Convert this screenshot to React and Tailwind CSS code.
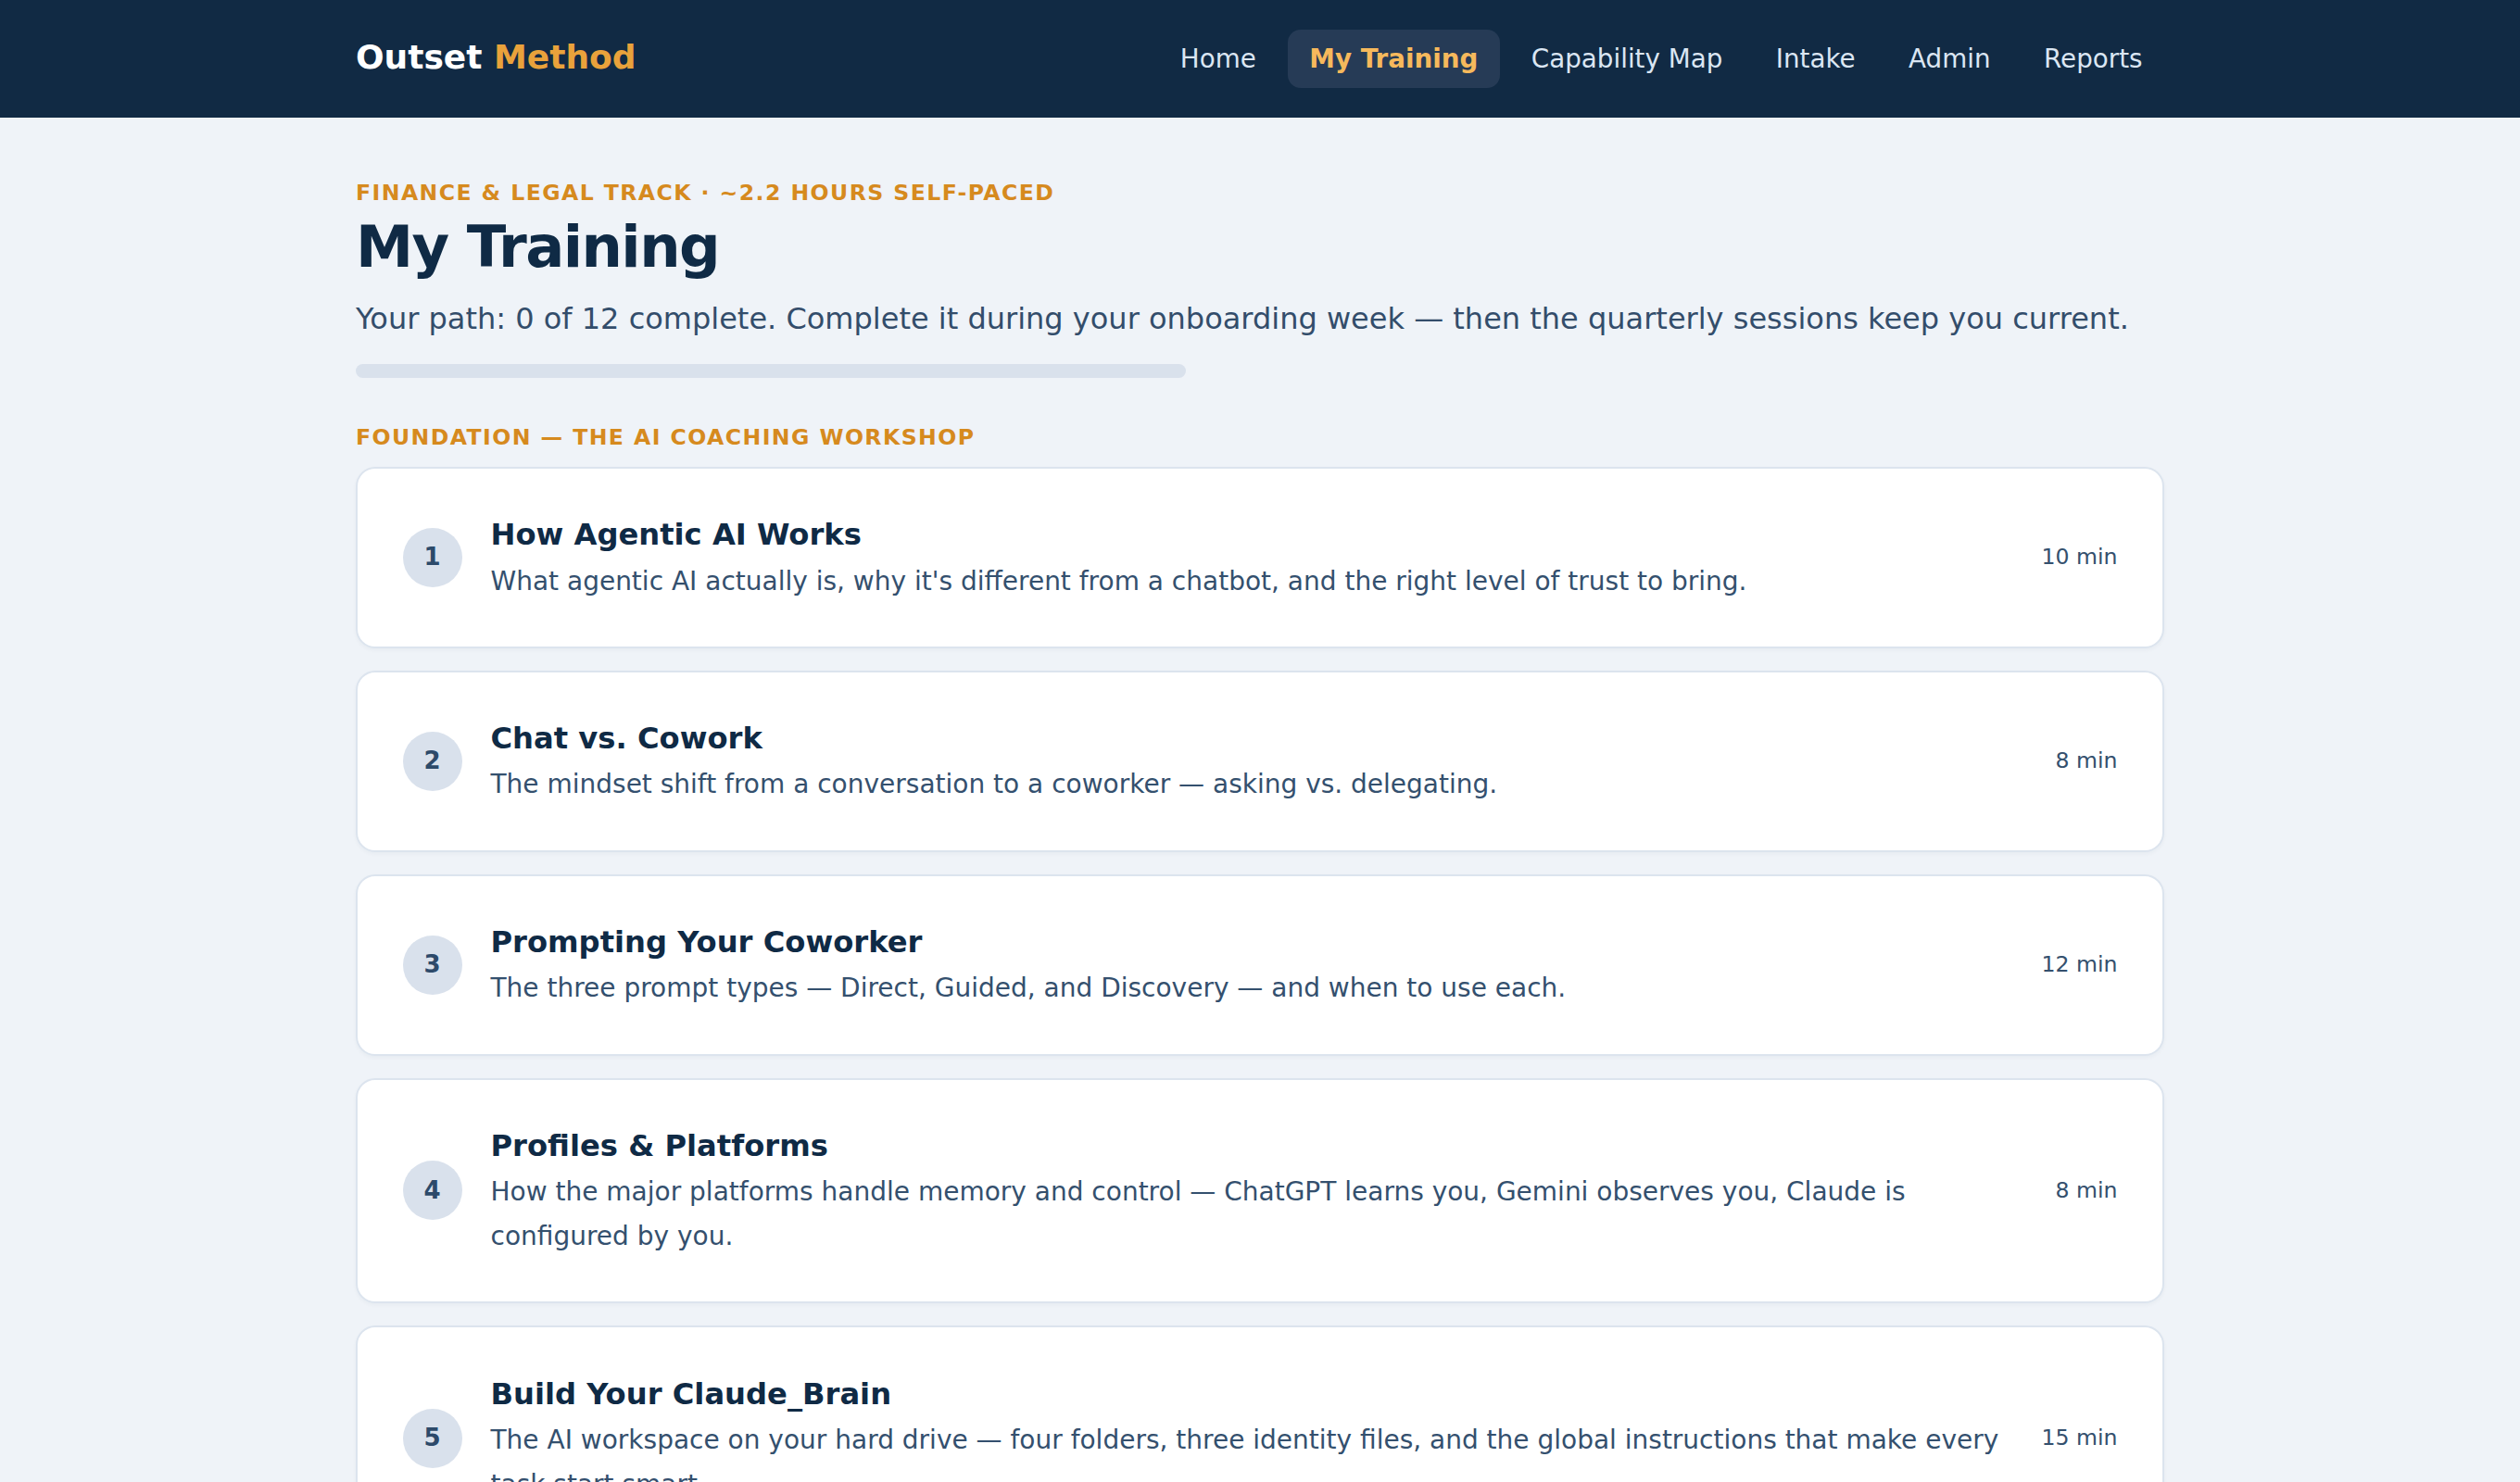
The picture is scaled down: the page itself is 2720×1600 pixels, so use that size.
import React from 'react';

const navLinks = ['Home', 'My Training', 'Capability Map', 'Intake', 'Admin', 'Reports'];

const modules = [
  {
    n: 1,
    title: 'How Agentic AI Works',
    desc: "What agentic AI actually is, why it's different from a chatbot, and the right level of trust to bring.",
    mins: '10 min',
  },
  {
    n: 2,
    title: 'Chat vs. Cowork',
    desc: 'The mindset shift from a conversation to a coworker — asking vs. delegating.',
    mins: '8 min',
  },
  {
    n: 3,
    title: 'Prompting Your Coworker',
    desc: 'The three prompt types — Direct, Guided, and Discovery — and when to use each.',
    mins: '12 min',
  },
  {
    n: 4,
    title: 'Profiles & Platforms',
    desc: 'How the major platforms handle memory and control — ChatGPT learns you, Gemini observes you, Claude is configured by you.',
    mins: '8 min',
  },
  {
    n: 5,
    title: 'Build Your Claude_Brain',
    desc: 'The AI workspace on your hard drive — four folders, three identity files, and the global instructions that make every task start smart.',
    mins: '15 min',
  },
];

export default function App() {
  const active = 'My Training';

  return (
    <div className="min-h-screen bg-[#eff3f8] font-['DejaVu_Sans',sans-serif]">
      {/* Top bar */}
      <header className="bg-[#112a44] h-[127px]">
        <div className="mx-auto max-w-[1952px] h-full flex items-center justify-between">
          <div className="text-[36px] font-bold text-white leading-none -mt-[3px]">
            Outset <span className="text-[#e9a23b]">Method</span>
          </div>
          <nav className="flex items-center gap-[10.5px]">
            {navLinks.map(link => (
              <a
                key={link}
                className={
                  link === active
                    ? 'px-[23.5px] py-[11px] rounded-[14px] bg-[#263b56] text-[#f6b95c] font-bold text-[27.75px] leading-[1.5]'
                    : 'px-[23.5px] py-[11px] rounded-[14px] text-[#dbe6f3] text-[27.75px] leading-[1.5]'
                }
              >
                {link}
              </a>
            ))}
          </nav>
        </div>
      </header>

      <main className="mx-auto max-w-[1952px] pt-[64px] pb-[60px]">
        <div className="text-[23.6px] font-bold tracking-[0.06em] uppercase text-[#d68a1e] leading-[1.5]">
          Finance &amp; Legal Track · ~2.2 hours self-paced
        </div>
        <h1 className="mt-[4px] text-[62.4px] font-bold text-[#0f2a45] leading-[1.2] tracking-[-0.025em]">
          My Training
        </h1>
        <p className="mt-[15px] text-[32px] text-[#334d6b] leading-[1.5]">
          Your path: 0 of 12 complete. Complete it during your onboarding week — then the quarterly sessions keep you current.
        </p>
        <div className="mt-[25px] w-[896px] h-[15px] rounded-full bg-[#d9e1ec]" />

        <h2 className="mt-[47px] text-[23.6px] font-bold tracking-[0.06em] uppercase text-[#d68a1e] leading-[1.5]">
          Foundation — The AI Coaching Workshop
        </h2>

        <div className="mt-[13px] flex flex-col gap-[24px]">
          {modules.map(m => (
            <div
              key={m.n}
              className="flex items-center gap-[31px] bg-white border-2 border-[#dce4ee] rounded-[21px] p-[48.5px] shadow-[0_2px_4px_rgba(15,42,69,0.04)]"
            >
              <div className="w-[64px] h-[64px] shrink-0 rounded-full bg-[#d9e1ec] flex items-center justify-center text-[26px] font-bold text-[#2d4a6a]">
                {m.n}
              </div>
              <div className="flex-1 min-w-0 translate-y-[2px]">
                <div className="text-[32.2px] font-bold text-[#0f2a45] leading-[1.3] translate-y-[1px]">{m.title}</div>
                <div className="mt-[5.5px] text-[28px] text-[#34506e] leading-[1.7]">{m.desc}</div>
              </div>
              <div className="shrink-0 text-[23.6px] text-[#34506e]">{m.mins}</div>
            </div>
          ))}
        </div>
      </main>
    </div>
  );
}
